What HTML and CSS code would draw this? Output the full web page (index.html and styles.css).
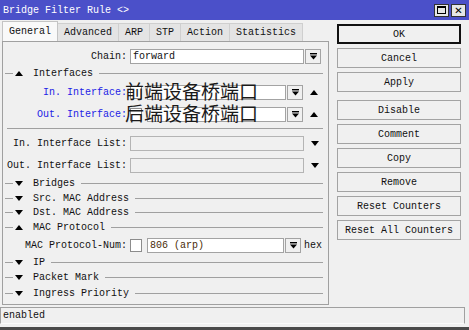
FILE: index.html
```html
<!DOCTYPE html>
<html>
<head>
    <title>Bridge Filter Rule</title>
    <link rel="stylesheet" href="styles.css">
</head>
<body>
<div class="window">
    <div class="titlebar">
        <span class="title">Bridge Filter Rule &lt;&gt;</span>
        <div class="win-buttons">
            <span class="win-btn"><span class="max-box"></span></span>
            <span class="win-btn close">&#x2715;</span>
        </div>
    </div>

    <div class="main">
        <div class="left">
            <div class="tabs">
                <span class="tab active">General</span>
                <span class="tab">Advanced</span>
                <span class="tab">ARP</span>
                <span class="tab">STP</span>
                <span class="tab">Action</span>
                <span class="tab">Statistics</span>
            </div>

            <div class="panel">
                <div class="row first">
                    <label class="label">Chain:</label>
                    <div class="input chain">forward</div>
                    <span class="dd"><svg width="7" height="7" viewBox="0 0 7 7"><rect x="0" y="0" width="7" height="1.4"/><polygon points="0,2.5 7,2.5 3.5,6.5"/></svg></span>
                </div>

                <div class="group"><span class="lead"></span><span class="tri up"></span><span class="gtext">Interfaces</span><span class="trail"></span></div>

                <div class="row iface">
                    <label class="label blue">In. Interface:</label>
                    <span class="check"></span>
                    <div class="input short"></div>
                    <span class="dd"><svg width="7" height="7" viewBox="0 0 7 7"><rect x="0" y="0" width="7" height="1.4"/><polygon points="0,2.5 7,2.5 3.5,6.5"/></svg></span>
                    <span class="tri up side"></span>
                    <span class="note">前端设备桥端口</span>
                </div>

                <div class="row iface out">
                    <label class="label blue">Out. Interface:</label>
                    <span class="check"></span>
                    <div class="input short"></div>
                    <span class="dd"><svg width="7" height="7" viewBox="0 0 7 7"><rect x="0" y="0" width="7" height="1.4"/><polygon points="0,2.5 7,2.5 3.5,6.5"/></svg></span>
                    <span class="tri up side"></span>
                    <span class="note">后端设备桥端口</span>
                </div>

                <div class="sep"></div>

                <div class="row list">
                    <label class="label">In. Interface List:</label>
                    <div class="input disabled"></div>
                    <span class="tri down side"></span>
                </div>

                <div class="row list">
                    <label class="label">Out. Interface List:</label>
                    <div class="input disabled"></div>
                    <span class="tri down side"></span>
                </div>

                <div class="group"><span class="lead"></span><span class="tri down"></span><span class="gtext">Bridges</span><span class="trail"></span></div>
                <div class="group short"><span class="lead"></span><span class="tri down"></span><span class="gtext">Src. MAC Address</span><span class="trail"></span></div>
                <div class="group"><span class="lead"></span><span class="tri down"></span><span class="gtext">Dst. MAC Address</span><span class="trail"></span></div>
                <div class="group"><span class="lead"></span><span class="tri up"></span><span class="gtext">MAC Protocol</span><span class="trail"></span></div>

                <div class="row proto">
                    <label class="label">MAC Protocol-Num:</label>
                    <span class="check"></span>
                    <div class="input num">806 (arp)</div>
                    <span class="dd"><svg width="7" height="7" viewBox="0 0 7 7"><rect x="0" y="0" width="7" height="1.4"/><polygon points="0,2.5 7,2.5 3.5,6.5"/></svg></span>
                    <span class="hex">hex</span>
                </div>

                <div class="group"><span class="lead"></span><span class="tri down"></span><span class="gtext">IP</span><span class="trail"></span></div>
                <div class="group"><span class="lead"></span><span class="tri down"></span><span class="gtext">Packet Mark</span><span class="trail"></span></div>
                <div class="group tall"><span class="lead"></span><span class="tri down"></span><span class="gtext">Ingress Priority</span><span class="trail"></span></div>
            </div>
        </div>

        <div class="actions">
            <button class="button default">OK</button>
            <button class="button">Cancel</button>
            <button class="button">Apply</button>
            <button class="button gap">Disable</button>
            <button class="button">Comment</button>
            <button class="button">Copy</button>
            <button class="button">Remove</button>
            <button class="button">Reset Counters</button>
            <button class="button">Reset All Counters</button>
        </div>
    </div>

    <div class="status">enabled</div>
</div>
</body>
</html>
```

FILE: styles.css
```css
body {
    margin: 0;
    background-color: #f0f0f0;
    font-family: "Liberation Mono", "DejaVu Sans Mono", monospace;
    font-size: 10px;
    color: #111111;
}

.window {
    width: 469px;
    height: 330px;
    box-sizing: border-box;
    border-bottom: 3px solid #4a4a4a;
    position: relative;
    overflow: hidden;
}

.titlebar {
    height: 20px;
    background-color: #4b50c9;
    display: flex;
    align-items: center;
    justify-content: space-between;
}

.title {
    color: #ffffff;
    margin-left: 3px;
    font-size: 10px;
}

.win-buttons {
    display: flex;
    gap: 2px;
    margin-right: 3px;
}

.win-btn {
    width: 15px;
    height: 13px;
    box-sizing: border-box;
    background-color: #e6e6e6;
    border: 1px solid #333333;
    display: flex;
    align-items: center;
    justify-content: center;
    font-size: 10px;
    font-weight: bold;
    color: #000000;
    font-family: "DejaVu Sans", sans-serif;
}

.max-box {
    width: 9px;
    height: 8px;
    box-sizing: border-box;
    border: 1px solid #000000;
    border-top-width: 2px;
}

.main {
    display: flex;
    height: 285px;
}

.left {
    margin-left: 2px;
    width: 327px;
    display: flex;
    flex-direction: column;
}

.tabs {
    height: 21px;
    display: flex;
    align-items: flex-end;
}

.tab {
    height: 17px;
    line-height: 17px;
    padding: 0 6px;
    background-color: #e4e4e4;
    border: 1px solid #cfcfcf;
    border-bottom: none;
    margin-right: -1px;
}

.tab.active {
    height: 19px;
    line-height: 19px;
    background-color: #f9f9f9;
    border-color: #c4c4c4;
    position: relative;
    z-index: 1;
}

.panel {
    height: 264px;
    box-sizing: border-box;
    border: 1px solid #a0a0a0;
    padding-top: 5px;
}

.row {
    display: flex;
    align-items: center;
    height: 22px;
    position: relative;
}

.row.first {
    height: 19px;
}

.row.out {
    height: 23px;
}

.row.proto {
    height: 20px;
}

.label {
    width: 124px;
    text-align: right;
    margin-right: 3px;
    flex: none;
    white-space: nowrap;
}

.label.blue {
    color: #2323e6;
}

.input {
    height: 15px;
    box-sizing: border-box;
    background-color: #ffffff;
    border: 1px solid #a3a3a3;
    line-height: 13px;
    padding-left: 2px;
    flex: none;
}

.input.chain {
    width: 174px;
}

.input.short {
    width: 139px;
}

.input.disabled {
    width: 174px;
    background-color: #f0f0f0;
    border-color: #b4b4b4;
}

.input.num {
    width: 137px;
    color: #4a2c08;
}

.check {
    width: 12px;
    height: 13px;
    box-sizing: border-box;
    border: 1px solid #8c8c8c;
    background-color: #ffffff;
    margin-right: 5px;
    flex: none;
}

.dd {
    width: 16px;
    height: 15px;
    box-sizing: border-box;
    border: 1px solid #a3a3a3;
    background-color: #f0f0f0;
    margin-left: 1px;
    display: flex;
    align-items: center;
    justify-content: center;
    flex: none;
}

.tri {
    width: 0;
    height: 0;
    border-left: 4px solid transparent;
    border-right: 4px solid transparent;
    flex: none;
}

.tri.up {
    border-bottom: 5px solid #000000;
}

.tri.down {
    border-top: 5px solid #000000;
}

.tri.side {
    margin-left: 7px;
}

.hex {
    margin-left: 3px;
}

.note {
    position: absolute;
    left: 122px;
    top: 0;
    font-family: "Noto Sans CJK SC", sans-serif;
    font-size: 19px;
    line-height: 20px;
    color: #1a1a1a;
    white-space: nowrap;
}

.sep {
    height: 1px;
    background-color: #a0a0a0;
    margin: 2px 5px 3px 4px;
}

.group {
    display: flex;
    align-items: center;
    height: 15px;
}

.group.short {
    height: 14px;
}

.group.tall {
    height: 16px;
}

.lead {
    width: 8px;
    height: 1px;
    background-color: #a0a0a0;
    margin-left: 2px;
    margin-right: 2px;
}

.gtext {
    margin-left: 10px;
}

.trail {
    flex: 1;
    height: 1px;
    background-color: #a0a0a0;
    margin-left: 6px;
    margin-right: 5px;
}

.actions {
    margin-left: 8px;
    width: 124px;
    padding-top: 4px;
    display: flex;
    flex-direction: column;
    gap: 4px;
}

.button {
    height: 20px;
    box-sizing: border-box;
    border: 1px solid #a3a3a3;
    background-color: #f0f0f0;
    font-family: "Liberation Mono", "DejaVu Sans Mono", monospace;
    font-size: 10px;
    color: #111111;
    padding: 0;
}

.button.default {
    border: 2px solid #111111;
}

.button.gap {
    margin-top: 4px;
}

.status {
    margin-top: 2px;
    width: 465px;
    height: 17px;
    box-sizing: border-box;
    border: 1px solid #a0a0a0;
    border-bottom-color: #fafafa;
    line-height: 15px;
    padding-left: 2px;
}
```
